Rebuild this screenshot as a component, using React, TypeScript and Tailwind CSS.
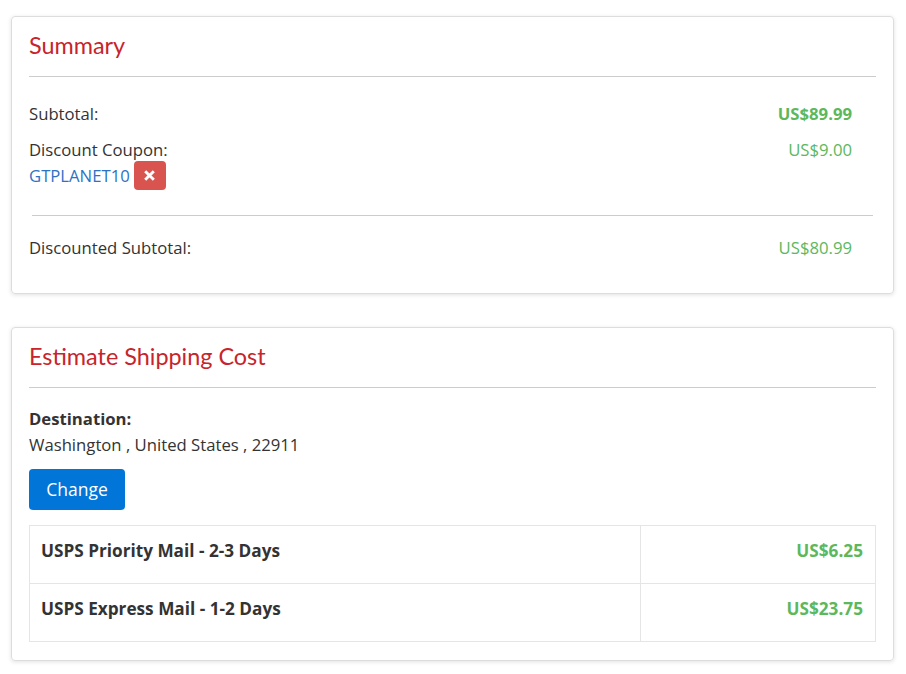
import React from "react";

export default function App() {
  return (
    <div className="min-h-[674px] bg-white pt-4 px-[11px] text-[#333]" style={{ fontFamily: '"Segoe UI", "Open Sans", "Noto Sans", sans-serif' }}>
      <div className="rounded-[4px] border border-[#ddd] shadow-[0_1px_4px_rgba(0,0,0,0.12)] px-[17px] pt-[12px] pb-[33px] w-[883px]">
        <h2 className="text-[23.4px] leading-[32px] text-[#c7242b]" style={{ fontFamily: 'Lato, sans-serif' }}>Summary</h2>
        <hr className="mt-[15px] border-t border-[#ccc]" />
        <div className="flex justify-between mt-[25px] pr-[24px] text-[16.7px] leading-[24px]">
          <span>Subtotal:</span>
          <span className="font-bold text-[#5cb85c]">US$89.99</span>
        </div>
        <div className="flex justify-between mt-[12px] pr-[24px] text-[16.7px] leading-[24px]">
          <div>
            <div>Discount Coupon:</div>
            <div className="flex items-center gap-[4px] -mt-[1px]">
              <span className="text-[#2f72c4]">GTPLANET10</span>
              <span className="inline-flex items-center justify-center w-[32px] h-[29px] rounded-[4px] bg-[#d9534f]">
                <svg width="11" height="11" viewBox="0 0 10 10">
                  <path d="M2 2 L8 8 M8 2 L2 8" stroke="white" strokeWidth="2.6" strokeLinecap="square" />
                </svg>
              </span>
            </div>
          </div>
          <span className="text-[#5cb85c]">US$9.00</span>
        </div>
        <hr className="mt-[25px] mx-[3px] border-t border-[#ccc]" />
        <div className="flex justify-between mt-[20px] pr-[24px] text-[16.7px] leading-[24px]">
          <span>Discounted Subtotal:</span>
          <span className="text-[#5cb85c]">US$80.99</span>
        </div>
      </div>

      <div className="mt-[33px] rounded-[4px] border border-[#ddd] shadow-[0_1px_4px_rgba(0,0,0,0.12)] px-[17px] pt-[12px] pb-[18px] w-[883px]">
        <h2 className="text-[23.4px] leading-[32px] text-[#c7242b]" style={{ fontFamily: 'Lato, sans-serif' }}>Estimate Shipping Cost</h2>
        <hr className="mt-[15px] border-t border-[#ccc]" />
        <div className="mt-[18px] text-[16.7px] leading-[26px] font-bold">Destination:</div>
        <div className="text-[16.7px] leading-[26px]">Washington , United States , 22911</div>
        <button className="mt-[11px] h-[41px] w-[96px] rounded-[4px] bg-[#0275d8] text-white text-[17.5px]">Change</button>
        <table className="mt-[15px] w-full border-collapse border border-[#e5e5e5] text-[17.2px]">
          <tbody>
            <tr className="h-[58px]">
              <td className="border border-[#e5e5e5] px-[11px] pb-[7px] font-bold">USPS Priority Mail - 2-3 Days</td>
              <td className="border border-[#e5e5e5] px-[12px] pb-[7px] font-bold text-right text-[#5cb85c] w-[235px]">US$6.25</td>
            </tr>
            <tr className="h-[58px]">
              <td className="border border-[#e5e5e5] px-[11px] pb-[7px] font-bold">USPS Express Mail - 1-2 Days</td>
              <td className="border border-[#e5e5e5] px-[12px] pb-[7px] font-bold text-right text-[#5cb85c] w-[235px]">US$23.75</td>
            </tr>
          </tbody>
        </table>
      </div>
    </div>
  );
}
